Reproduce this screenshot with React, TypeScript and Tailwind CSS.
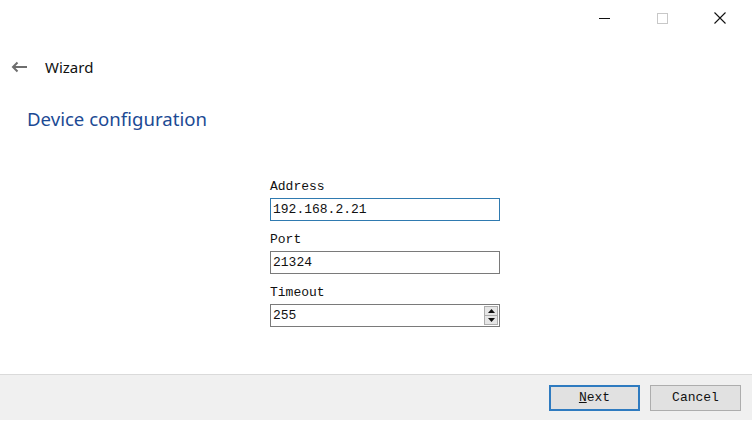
import { useState } from 'react';

const mono = { fontFamily: '"Liberation Mono", "DejaVu Sans Mono", monospace' };

export default function App() {
  const [address, setAddress] = useState('192.168.2.21');
  const [port, setPort] = useState('21324');
  const [timeout, setTimeoutValue] = useState('255');

  return (
    <div
      className="w-[752px] h-[421px] bg-white flex flex-col overflow-hidden"
      style={{ fontFamily: '"Noto Sans", "Open Sans", sans-serif' }}
    >
      {/* Title bar */}
      <div className="h-[36px] flex justify-end pr-[3px]">
        <button className="w-[58px] h-full flex items-center justify-center">
          <svg width="11" height="11" viewBox="0 0 11 11">
            <path d="M0 5.5h11" stroke="#111" strokeWidth="1" />
          </svg>
        </button>
        <button className="w-[58px] h-full flex items-center justify-center">
          <svg width="11" height="11" viewBox="0 0 11 11">
            <rect x="0.5" y="0.5" width="10" height="10" fill="none" stroke="#c8c8c8" strokeWidth="1" />
          </svg>
        </button>
        <button className="w-[58px] h-full flex items-center justify-center">
          <svg width="12" height="12" viewBox="0 0 12 12">
            <path d="M0.5 0.5l11 11M11.5 0.5l-11 11" stroke="#111" strokeWidth="1.1" />
          </svg>
        </button>
      </div>

      {/* Header */}
      <div className="h-[30px] mt-[16px] flex items-center">
        <svg className="ml-[11px]" width="17" height="12" viewBox="0 0 17 12">
          <path d="M16 6H2M6.5 1.5L2 6l4.5 4.5" stroke="#6e6e6e" strokeWidth="2" fill="none" />
        </svg>
        <span className="ml-[17px] text-[15px] text-[#111]">Wizard</span>
      </div>

      <h1 className="ml-[27px] mt-[24px] text-[18.6px] leading-[26px] text-[#1c4a94]">
        Device configuration
      </h1>

      {/* Form */}
      <div className="ml-[270px] mt-[44px] w-[230px] flex flex-col text-[13px] text-[#111]" style={mono}>
        <label className="h-[22px] leading-[22px]">Address</label>
        <input
          value={address}
          onChange={(e) => setAddress(e.target.value)}
          className="h-[23px] px-[2px] border border-[#2f7ab0] outline-none"
          style={mono}
        />
        <label className="mt-[8px] h-[22px] leading-[22px]">Port</label>
        <input
          value={port}
          onChange={(e) => setPort(e.target.value)}
          className="h-[23px] px-[2px] border border-[#7a7a7a] outline-none"
          style={mono}
        />
        <label className="mt-[8px] h-[22px] leading-[22px]">Timeout</label>
        <div className="h-[23px] flex items-center border border-[#7a7a7a]">
          <input
            value={timeout}
            onChange={(e) => setTimeoutValue(e.target.value)}
            className="flex-1 min-w-0 h-full px-[2px] outline-none"
            style={mono}
          />
          <div className="w-[14px] h-[19px] mr-[1px] flex flex-col">
            <div className="flex-1 bg-[#e6e6e6] border border-[#adadad] flex items-center justify-center">
              <svg width="7" height="4" viewBox="0 0 7 4"><path d="M3.5 0L7 4H0z" fill="#111" /></svg>
            </div>
            <div className="flex-1 bg-[#e6e6e6] border border-t-0 border-[#adadad] flex items-center justify-center">
              <svg width="7" height="4" viewBox="0 0 7 4"><path d="M0 0h7L3.5 4z" fill="#111" /></svg>
            </div>
          </div>
        </div>
      </div>

      {/* Footer */}
      <div className="mt-auto mb-[1px] h-[46px] bg-[#f0f0f0] border-t border-[#dadada] flex items-center justify-end gap-[10px] pr-[11px]">
        <button
          className="w-[91px] h-[26px] bg-[#e1e1e1] border-2 border-[#2f7bc0] text-[13px] text-[#111]"
          style={mono}
        >
          <span className="underline">N</span>ext
        </button>
        <button
          className="w-[91px] h-[26px] bg-[#e1e1e1] border border-[#adadad] text-[13px] text-[#111]"
          style={mono}
        >
          Cancel
        </button>
      </div>
    </div>
  );
}
